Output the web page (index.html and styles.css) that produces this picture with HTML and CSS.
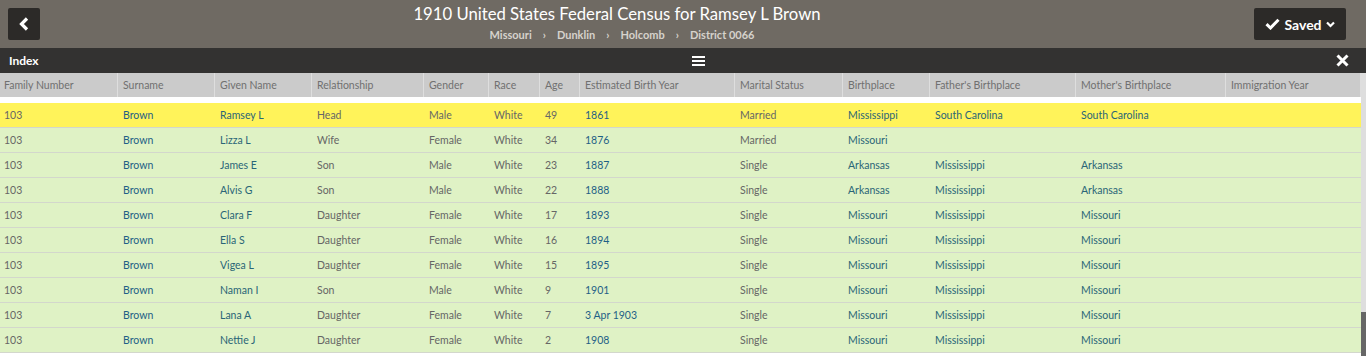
FILE: index.html
```html
<!DOCTYPE html>
<html>
<head>
<meta charset="utf-8">
<link rel="stylesheet" href="styles.css">
</head>
<body>
<header class="topbar">
  <button class="back-btn" aria-label="Back">
    <svg width="12" height="14" viewBox="0 0 12 14"><path d="M9 1.5 L3.5 7 L9 12.5" fill="none" stroke="#fff" stroke-width="3.2" stroke-linejoin="miter"/></svg>
  </button>
  <div class="title-block">
    <h1 class="title">1910 United States Federal Census for Ramsey L Brown</h1>
    <nav class="crumbs">
      <span>Missouri</span><span class="sep">›</span><span>Dunklin</span><span class="sep">›</span><span>Holcomb</span><span class="sep">›</span><span>District 0066</span>
    </nav>
  </div>
  <button class="saved-btn">
    <svg width="15" height="12" viewBox="0 0 15 12"><path d="M1.5 6.2 L5.5 10 L13.5 1.8" fill="none" stroke="#fff" stroke-width="3"/></svg>
    <span>Saved</span>
    <svg width="9" height="7" viewBox="0 0 9 7"><path d="M1 1.5 L4.5 5 L8 1.5" fill="none" stroke="#fff" stroke-width="2.2"/></svg>
  </button>
</header>
<div class="indexbar">
  <span class="index-label">Index</span>
  <svg class="hamburger" width="13" height="10" viewBox="0 0 13 10"><rect x="0" y="0" width="13" height="2" fill="#fff"/><rect x="0" y="4" width="13" height="2" fill="#fff"/><rect x="0" y="8" width="13" height="2" fill="#fff"/></svg>
  <span class="fill"></span>
  <svg class="close" width="13" height="13" viewBox="0 0 13 13"><path d="M1.5 1.5 L11.5 11.5 M11.5 1.5 L1.5 11.5" stroke="#fff" stroke-width="3"/></svg>
</div>
<div class="content">
  <div class="table">
    <div class="row head">
      <div>Family Number</div><div>Surname</div><div>Given Name</div><div>Relationship</div><div>Gender</div><div>Race</div><div>Age</div><div>Estimated Birth Year</div><div>Marital Status</div><div>Birthplace</div><div>Father's Birthplace</div><div>Mother's Birthplace</div><div>Immigration Year</div>
    </div>
    <div class="spacer"></div>
    <div class="row data hl">
      <div class="g">103</div><div class="b">Brown</div><div class="t">Ramsey L</div><div class="g">Head</div><div class="g">Male</div><div class="g">White</div><div class="g">49</div><div class="b">1861</div><div class="g">Married</div><div class="t">Mississippi</div><div class="t">South Carolina</div><div class="t">South Carolina</div><div></div>
    </div>
    <div class="row data">
      <div class="g">103</div><div class="b">Brown</div><div class="t">Lizza L</div><div class="g">Wife</div><div class="g">Female</div><div class="g">White</div><div class="g">34</div><div class="b">1876</div><div class="g">Married</div><div class="t">Missouri</div><div></div><div></div><div></div>
    </div>
    <div class="row data">
      <div class="g">103</div><div class="b">Brown</div><div class="t">James E</div><div class="g">Son</div><div class="g">Male</div><div class="g">White</div><div class="g">23</div><div class="b">1887</div><div class="g">Single</div><div class="t">Arkansas</div><div class="t">Mississippi</div><div class="t">Arkansas</div><div></div>
    </div>
    <div class="row data">
      <div class="g">103</div><div class="b">Brown</div><div class="t">Alvis G</div><div class="g">Son</div><div class="g">Male</div><div class="g">White</div><div class="g">22</div><div class="b">1888</div><div class="g">Single</div><div class="t">Arkansas</div><div class="t">Mississippi</div><div class="t">Arkansas</div><div></div>
    </div>
    <div class="row data">
      <div class="g">103</div><div class="b">Brown</div><div class="t">Clara F</div><div class="g">Daughter</div><div class="g">Female</div><div class="g">White</div><div class="g">17</div><div class="b">1893</div><div class="g">Single</div><div class="t">Missouri</div><div class="t">Mississippi</div><div class="t">Missouri</div><div></div>
    </div>
    <div class="row data">
      <div class="g">103</div><div class="b">Brown</div><div class="t">Ella S</div><div class="g">Daughter</div><div class="g">Female</div><div class="g">White</div><div class="g">16</div><div class="b">1894</div><div class="g">Single</div><div class="t">Missouri</div><div class="t">Mississippi</div><div class="t">Missouri</div><div></div>
    </div>
    <div class="row data">
      <div class="g">103</div><div class="b">Brown</div><div class="t">Vigea L</div><div class="g">Daughter</div><div class="g">Female</div><div class="g">White</div><div class="g">15</div><div class="b">1895</div><div class="g">Single</div><div class="t">Missouri</div><div class="t">Mississippi</div><div class="t">Missouri</div><div></div>
    </div>
    <div class="row data">
      <div class="g">103</div><div class="b">Brown</div><div class="t">Naman I</div><div class="g">Son</div><div class="g">Male</div><div class="g">White</div><div class="g">9</div><div class="b">1901</div><div class="g">Single</div><div class="t">Missouri</div><div class="t">Mississippi</div><div class="t">Missouri</div><div></div>
    </div>
    <div class="row data">
      <div class="g">103</div><div class="b">Brown</div><div class="t">Lana A</div><div class="g">Daughter</div><div class="g">Female</div><div class="g">White</div><div class="g">7</div><div class="b">3 Apr 1903</div><div class="g">Single</div><div class="t">Missouri</div><div class="t">Mississippi</div><div class="t">Missouri</div><div></div>
    </div>
    <div class="row data">
      <div class="g">103</div><div class="b">Brown</div><div class="t">Nettie J</div><div class="g">Daughter</div><div class="g">Female</div><div class="g">White</div><div class="g">2</div><div class="b">1908</div><div class="g">Single</div><div class="t">Missouri</div><div class="t">Mississippi</div><div class="t">Missouri</div><div></div>
    </div>
  </div>
  <div class="scrollbar"><div class="thumb"></div></div>
</div>
</body>
</html>
```

FILE: styles.css
```css
html, body {
  margin: 0;
  padding: 0;
  background: #fff;
  overflow: hidden;
}
body {
  font-family: Lato, "Open Sans", "Liberation Sans", sans-serif;
  width: 1366px;
  height: 356px;
}
.topbar {
  height: 48px;
  background: #6f6a63;
  display: flex;
  align-items: flex-start;
  padding: 8px 20px 0 8px;
  box-sizing: border-box;
}
.back-btn {
  flex: none;
  width: 32px;
  height: 32px;
  background: #2c2a28;
  border: none;
  border-radius: 2px;
  display: flex;
  align-items: center;
  justify-content: center;
  padding: 0;
}
.title-block {
  flex: 1;
  display: flex;
  flex-direction: column;
  align-items: center;
  padding-right: 60px;
}
.title {
  margin: -6px 0 0 0;
  font-size: 16.7px;
  font-weight: 400;
  color: #fff;
  line-height: 24px;
}
.crumbs {
  display: flex;
  font-size: 11px;
  font-weight: 700;
  color: #d6d2cc;
  line-height: 14px;
  margin-top: 2px;
  padding-left: 10px;
}
.crumbs .sep {
  margin: 0 11px;
}
.saved-btn {
  flex: none;
  width: 92px;
  height: 32px;
  background: #2c2a28;
  border: none;
  border-radius: 2px;
  color: #fff;
  font-family: Lato, "Open Sans", sans-serif;
  font-weight: 700;
  font-size: 14px;
  display: flex;
  align-items: center;
  justify-content: center;
  gap: 4px;
  padding: 0;
}
.indexbar {
  height: 25px;
  background: #333231;
  display: flex;
  align-items: center;
  padding: 0 17px 0 9px;
  box-sizing: border-box;
}
.index-label {
  color: #fff;
  font-size: 12px;
  font-weight: 700;
  width: 683px;
}
.fill {
  flex: 1;
}
.content {
  display: flex;
  align-items: stretch;
  height: 283px;
}
.table {
  width: 1361px;
  display: flex;
  flex-direction: column;
}
.row {
  display: grid;
  grid-template-columns: 118px 97px 97px 112px 65px 51px 40px 155px 108px 87px 146px 150px 135px;
  font-size: 10.5px;
  align-items: center;
}
.row > div {
  padding-left: 4px;
  white-space: nowrap;
  overflow: hidden;
  box-sizing: border-box;
}
.row > div + div {
  padding-left: 5px;
}
.head {
  height: 24px;
  background: #cbcbcb;
  color: #707070;
}
.head > div {
  height: 24px;
  line-height: 24px;
  border-right: 1px solid #dedede;
}
.spacer {
  height: 6px;
}
.data {
  height: 25px;
  background: #dff2c5;
  border-bottom: 1px solid #d3d7cc;
  box-sizing: border-box;
}
.data.hl {
  background: #fff35a;
}
.g { color: #666; }
.b { color: #1e5f86; }
.t { color: #2a6577; }
.scrollbar {
  width: 5px;
  background: #dedede;
  display: flex;
  flex-direction: column;
  justify-content: flex-end;
}
.thumb {
  height: 44px;
  background: #666;
}
```
